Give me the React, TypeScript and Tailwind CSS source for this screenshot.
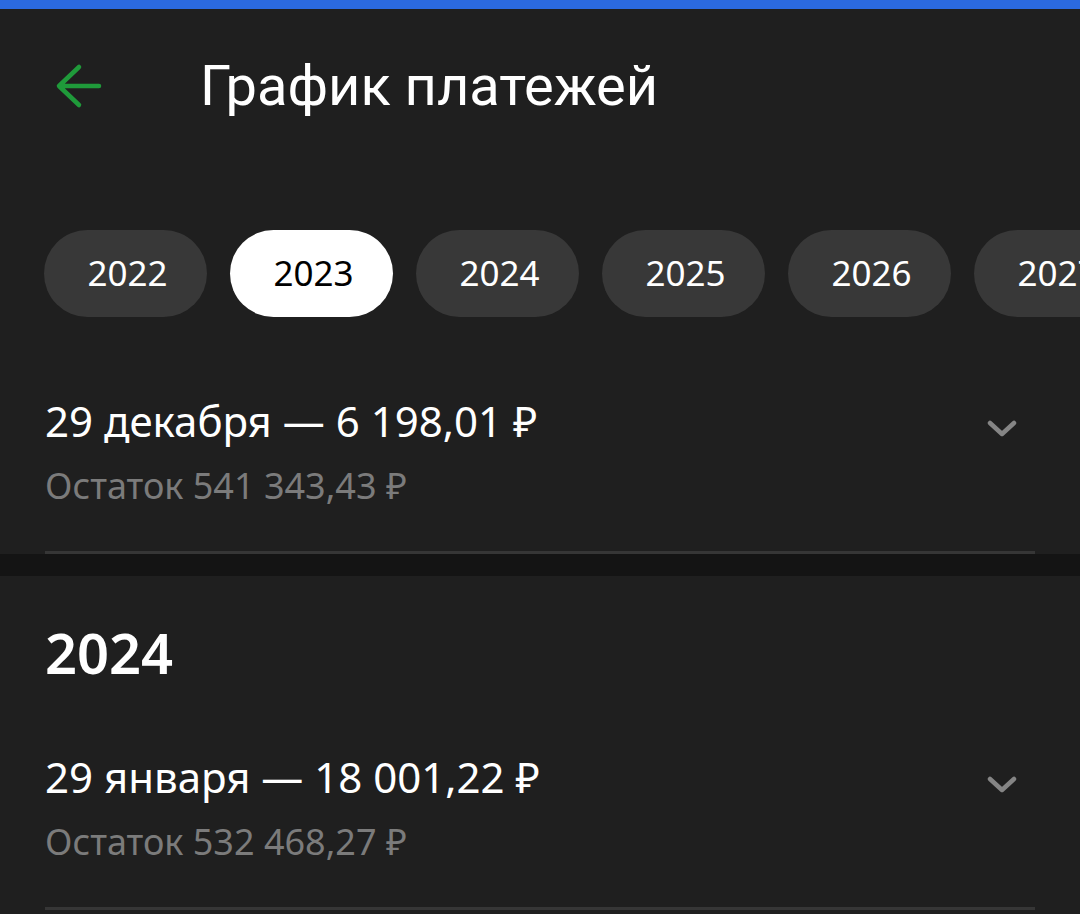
import { useState } from "react";

const years = [2022, 2023, 2024, 2025, 2026, 2027, 2028];

function Chevron() {
  return (
    <svg width="30" height="18" viewBox="0 0 30 18" fill="none">
      <path d="M3 3 L15 14 L27 3" stroke="#858585" strokeWidth="4.5" strokeLinecap="round" strokeLinejoin="round" />
    </svg>
  );
}

function Payment({ date, sum, rest }: { date: string; sum: string; rest: string }) {
  return (
    <div className="px-[45px]">
      <div className="flex items-start justify-between pr-[18px]">
        <div>
          <div className="text-[42px] leading-[52px] text-white">
            {date} — {sum}
          </div>
          <div className="mt-[17px] text-[36px] leading-[44px] text-[#7b7b7b]">Остаток {rest}</div>
        </div>
        <div className="mt-[25px]">
          <Chevron />
        </div>
      </div>
      <div className="mt-[43px] h-[3px] bg-[#363636]"></div>
    </div>
  );
}

export default function App() {
  const [selected, setSelected] = useState(2023);

  return (
    <div className="h-[914px] overflow-hidden bg-[#1f1f1f]" style={{ fontFamily: "'Noto Sans', 'Open Sans', sans-serif" }}>
      {/* статус-бар */}
      <div className="h-[9px] bg-[#2b6ae0]"></div>

      {/* ШАПКА */}
      <div className="flex h-[156px] items-center pl-[55px] pb-[2px]">
        <svg width="48" height="48" viewBox="0 0 48 48" fill="none">
          <path d="M44 24 H5 M24 5 L4 24 L24 43" stroke="#1f9a3a" strokeWidth="4.5" strokeLinecap="round" strokeLinejoin="round" />
        </svg>
        <h1 className="ml-[97px] text-[56px] font-normal text-white" style={{ fontFamily: "Roboto, 'Noto Sans', sans-serif" }}>
          График платежей
        </h1>
      </div>

      {/* ГОДЫ */}
      <div className="mt-[65px] flex gap-[23px] overflow-hidden pl-[44px]">
        {years.map((y) => (
          <button
            key={y}
            onClick={() => setSelected(y)}
            className={
              y === selected
                ? "flex h-[87px] w-[163px] shrink-0 items-center justify-center rounded-full bg-white pl-[4px] text-[35px] text-black"
                : "flex h-[87px] w-[163px] shrink-0 items-center justify-center rounded-full bg-[#383838] pl-[4px] text-[35px] text-white"
            }
          >
            {y}
          </button>
        ))}
      </div>

      <div className="mt-[78px]">
        <Payment date="29 декабря" sum="6 198,01 ₽" rest="541 343,43 ₽" />
      </div>

      <div className="h-[22px] bg-[#141414]"></div>

      <div className="px-[45px] pt-[43px] text-[56px] font-semibold leading-[66px] text-white">2024</div>

      <div className="mt-[66px]">
        <Payment date="29 января" sum="18 001,22 ₽" rest="532 468,27 ₽" />
      </div>
    </div>
  );
}
